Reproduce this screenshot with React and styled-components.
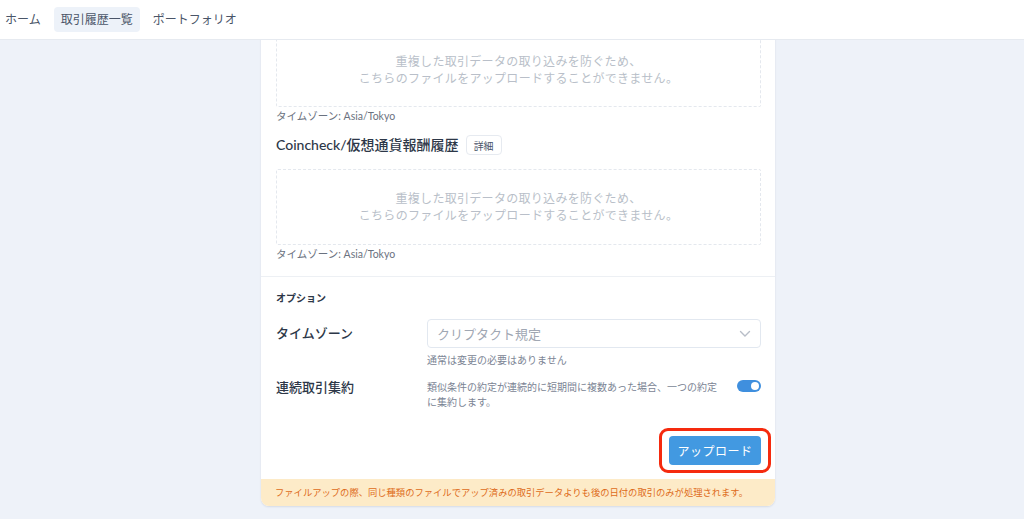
import React, { useLayoutEffect, useRef } from 'react';
import styled, { createGlobalStyle } from 'styled-components';

const GlobalStyle = createGlobalStyle`
  html, body {
    margin: 0;
    padding: 0;
    height: 100%;
    overflow: hidden;
    background: #eef2f9;
    font-family: Lato, "Noto Sans CJK JP", "Noto Sans", sans-serif;
    color: #2d3748;
  }
  * { box-sizing: border-box; }
`;

const Page = styled.div`
  display: flex;
  flex-direction: column;
  height: 100vh;
`;

const TopBar = styled.header`
  flex: none;
  height: 40px;
  background: #fff;
  border-bottom: 1px solid #e6eaf0;
  display: flex;
  align-items: center;
  gap: 6px;
`;

const NavItem = styled.a`
  font-size: 12px;
  color: #4a5568;
  padding: 5px 7px;
  border-radius: 4px;
  line-height: 15px;
  background: ${p => (p.active ? '#edf2f9' : 'transparent')};
  text-decoration: none;
  cursor: pointer;
`;

const Scroller = styled.main`
  flex: 1;
  overflow: hidden;
  display: flex;
  justify-content: center;
  padding-left: 12px;
`;

const Column = styled.div`
  width: 514px;
  padding: 20px 0 24px;
  height: max-content;
`;

const Card = styled.section`
  background: #fff;
  border-radius: 8px;
  box-shadow: 0 1px 2px rgba(30, 50, 90, 0.12);
  overflow: hidden;
`;

const Body = styled.div`
  padding: 14px 14px 15px 15px;
  display: flex;
  flex-direction: column;
`;

const SourceTitle = styled.div`
  display: flex;
  align-items: center;
  gap: 7px;
  margin: 12px 0 14px;
  font-size: 14px;
  font-weight: 500;
  color: #2d3748;
  line-height: 20px;
`;

const DetailButton = styled.button`
  font-family: inherit;
  font-size: 10px;
  color: #4a5568;
  background: #fff;
  border: 1px solid #e6eaf0;
  border-radius: 4px;
  height: 20px;
  padding: 0 7px;
`;

const DropZone = styled.div`
  height: ${p => p.h}px;
  border: 1px dashed #e4e8ee;
  border-radius: 2px;
  display: flex;
  flex-direction: column;
  align-items: center;
  justify-content: center;
  font-size: 12px;
  line-height: 17px;
  color: #b9bfc9;
  letter-spacing: 0.3px;
`;

const ZoneNote = styled.div`
  margin-top: 2px;
  font-size: 10.5px;
  line-height: 14px;
  color: #6b7280;
`;

const Divider = styled.hr`
  margin: 0;
  border: none;
  border-top: 1px solid #edf0f4;
`;

const Options = styled.div`
  padding: 14px 14px 6px 15px;
`;

const OptionsHeading = styled.div`
  font-size: 10px;
  font-weight: 700;
  color: #2d3748;
  line-height: 14px;
  margin-bottom: 14px;
`;

const OptionRow = styled.div`
  display: grid;
  grid-template-columns: 151px 1fr;
  margin-bottom: ${p => p.gap || 0}px;
`;

const OptionLabel = styled.div`
  font-size: 13px;
  font-weight: 500;
  color: #2d3748;
  line-height: 18px;
  padding-top: ${p => p.pt || 0}px;
`;

const SelectBox = styled.div`
  height: 29px;
  border: 1px solid #e2e8f0;
  border-radius: 4px;
  display: flex;
  align-items: center;
  justify-content: space-between;
  padding: 0 9px;
  font-size: 13px;
  color: #a0a7b3;
`;

const Help = styled.div`
  font-size: 10px;
  color: #7b8494;
  line-height: 15px;
  margin-top: ${p => p.mt || 0}px;
  max-width: ${p => p.w || 'none'};
`;

const ToggleLine = styled.div`
  display: flex;
  justify-content: space-between;
  align-items: flex-start;
  gap: 10px;
`;

const Switch = styled.span`
  flex: none;
  position: relative;
  width: 24px;
  height: 12px;
  margin-top: 2px;
  border-radius: 6px;
  background: #3f8fde;
  &::after {
    content: '';
    position: absolute;
    top: 2px;
    right: 2px;
    width: 8px;
    height: 8px;
    border-radius: 50%;
    background: #fff;
  }
`;

const Actions = styled.div`
  display: flex;
  justify-content: flex-end;
  margin-top: 18px;
`;

const Highlight = styled.div`
  margin-right: -10px;
  padding: 5px 7px;
  border: 3px solid #f52a0e;
  border-radius: 9px;
`;

const UploadButton = styled.button`
  font-family: inherit;
  font-size: 12px;
  letter-spacing: 0.5px;
  color: #fff;
  background: #4299e1;
  border: none;
  border-radius: 4px;
  width: 92px;
  height: 29px;
`;

const Notice = styled.div`
  background: #fdebc8;
  color: #dd6b20;
  font-size: 9.3px;
  line-height: 27px;
  white-space: nowrap;
  padding: 0 14px;
`;

const Chevron = () => (
  <svg width="12" height="8" viewBox="0 0 12 8" fill="none">
    <path d="M1.5 1.5 6 6l4.5-4.5" stroke="#b8bec8" strokeWidth="1.4" strokeLinecap="round" />
  </svg>
);

const LOCKED = ['重複した取引データの取り込みを防ぐため、', 'こちらのファイルをアップロードすることができません。'];

const Locked = ({ h, innerRef }) => (
  <DropZone h={h} ref={innerRef}>
    {LOCKED.map(line => (
      <div key={line}>{line}</div>
    ))}
  </DropZone>
);

export default function App() {
  const scrollRef = useRef(null);
  const firstZone = useRef(null);

  // page is shown scrolled so the first locked zone ends 67px below the bar
  useLayoutEffect(() => {
    const el = firstZone.current;
    const sc = scrollRef.current;
    if (!el || !sc) return;
    const top = el.getBoundingClientRect().bottom - sc.getBoundingClientRect().top;
    sc.scrollTop = top - 67;
  }, []);

  return (
    <Page>
      <GlobalStyle />
      <TopBar>
        <NavItem style={{ marginLeft: -2 }}>ホーム</NavItem>
        <NavItem active>取引履歴一覧</NavItem>
        <NavItem>ポートフォリオ</NavItem>
      </TopBar>
      <Scroller ref={scrollRef}>
        <Column>
          <Card>
            <Body>
              <Locked h={75} innerRef={firstZone} />
              <ZoneNote>タイムゾーン: Asia/Tokyo</ZoneNote>

              <SourceTitle>
                Coincheck/仮想通貨報酬履歴 <DetailButton>詳細</DetailButton>
              </SourceTitle>
              <Locked h={76} />
              <ZoneNote>タイムゾーン: Asia/Tokyo</ZoneNote>
            </Body>
            <Divider />
            <Options>
              <OptionsHeading>オプション</OptionsHeading>
              <OptionRow gap={10}>
                <OptionLabel pt={5}>タイムゾーン</OptionLabel>
                <div>
                  <SelectBox>
                    クリプタクト規定
                    <Chevron />
                  </SelectBox>
                  <Help mt={5}>通常は変更の必要はありません</Help>
                </div>
              </OptionRow>
              <OptionRow>
                <OptionLabel>連続取引集約</OptionLabel>
                <ToggleLine>
                  <Help mt={2} w="296px">
                    類似条件の約定が連続的に短期間に複数あった場合、一つの約定に集約します。
                  </Help>
                  <Switch />
                </ToggleLine>
              </OptionRow>
              <Actions>
                <Highlight>
                  <UploadButton>アップロード</UploadButton>
                </Highlight>
              </Actions>
            </Options>
            <Notice>
              ファイルアップの際、同じ種類のファイルでアップ済みの取引データよりも後の日付の取引のみが処理されます。
            </Notice>
          </Card>
        </Column>
      </Scroller>
    </Page>
  );
}
